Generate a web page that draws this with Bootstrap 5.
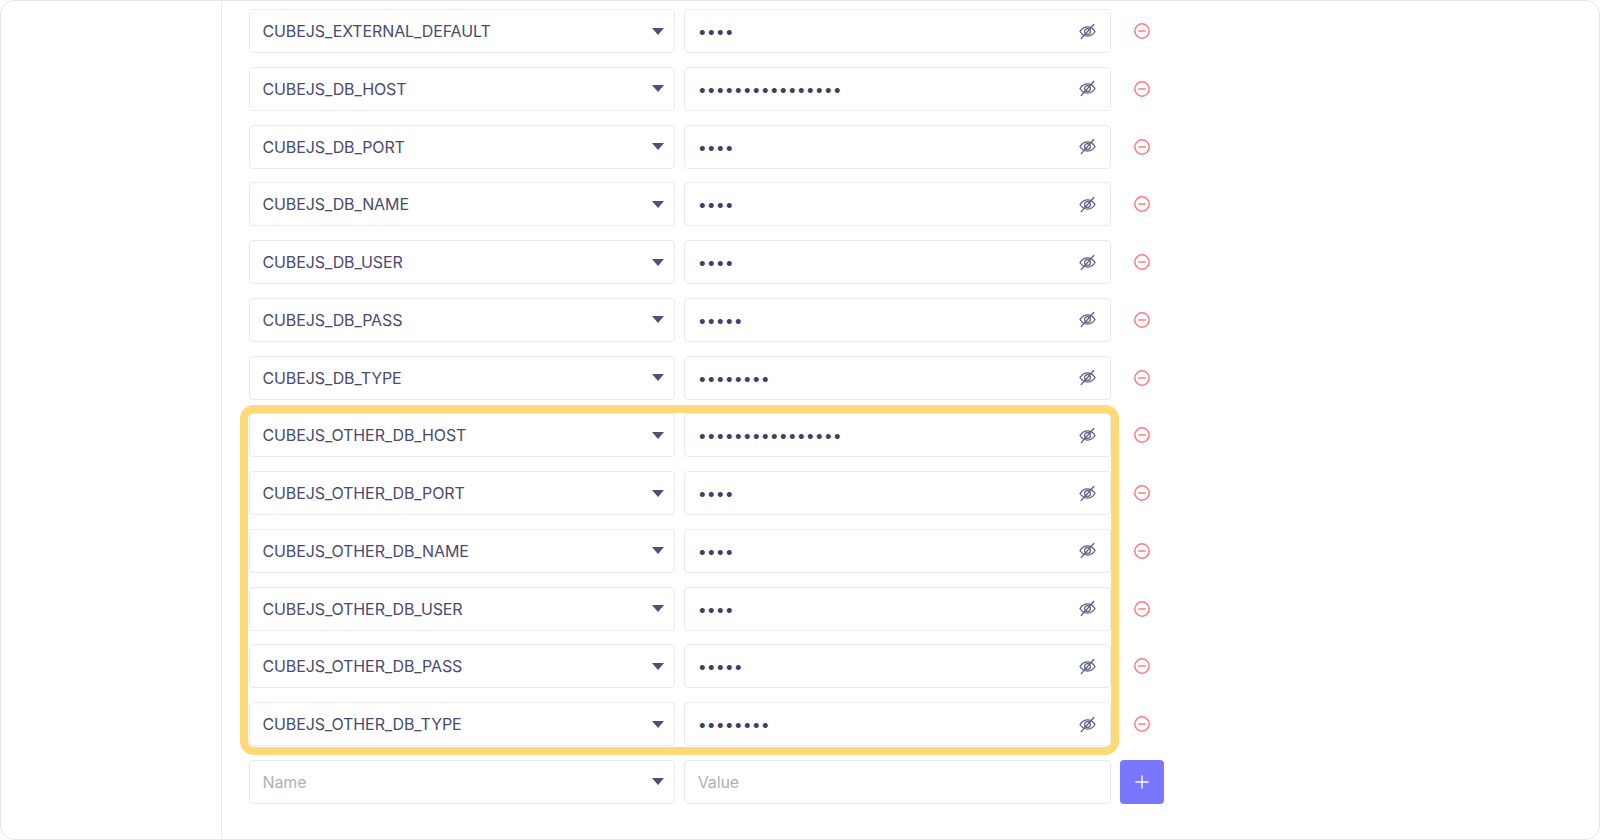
<!DOCTYPE html>
<html lang="en">
<head>
<meta charset="utf-8">
<title>Environment variables</title>
<link href="https://cdn.jsdelivr.net/npm/bootstrap@5.3.0/dist/css/bootstrap.min.css" rel="stylesheet">
<style>
html, body { height: 100%; margin: 0; background: #fff; }
body { font-family: Inter, "Liberation Sans", sans-serif; color: #4a4a70; overflow: hidden; }
.app-frame { height: 840px; border: 1px solid #e6e6ec; border-radius: 14px; overflow: hidden; }
.side-pane { width: 221px; flex: none; border-right: 1px solid #e6e6ec; }
.env-pane { padding: 8.1px 0 0 27px; }
.env-list { display: flex; flex-direction: column; gap: 13.75px; width: 917px; }
.env-group { display: flex; flex-direction: column; gap: 13.75px; position: relative; }
.env-mark { position: absolute; inset: -8.5px auto -8.5px -9px; width: 878.5px; border: 8.5px solid #fdd977; border-radius: 14px; pointer-events: none; }
.env-row { display: flex; gap: 9px; height: 44px; align-items: stretch; position: relative; }
.env-cell { width: 426.25px; flex: none; position: relative; }
.env-cell .form-control { height: 44px; padding: 0 44px 0 12.5px; border: 1px solid #e9e9ef; border-radius: 4px; font-size: 16px; letter-spacing: -0.11px; color: #4a4a70; background: #fff; box-shadow: none; }
.env-cell .form-control::placeholder { color: #b0b0b8; opacity: 1; }
.env-cell input[type=password] { letter-spacing: 0; color: #3f3f68; }
.env-caret { position: absolute; right: 11.5px; top: 18.5px; width: 0; height: 0; border-left: 6px solid transparent; border-right: 6px solid transparent; border-top: 7px solid #4f4f78; pointer-events: none; }
.env-eye { position: absolute; right: 14.5px; top: 13.5px; width: 17px; height: 17px; color: #5c5c7e; }
.env-minus { width: 44px; flex: none; display: flex; align-items: center; justify-content: center; color: #ff7a80; }
.env-add { width: 44.5px; height: 44.5px; flex: none; padding: 0; border: 0; border-radius: 4px; background: #7a77ff; color: #fff; display: flex; align-items: center; justify-content: center; }
</style>
</head>
<body>
<svg width="0" height="0" class="d-block" aria-hidden="true">
  <symbol id="ic-eye" viewBox="0 0 17 17"><path d="M1 8.5C3 5.400 5.600 3.900 8.500 3.900s5.500 1.500 7.500 4.600c-2 3.100-4.600 4.600-7.500 4.600S3 11.600 1 8.500Z" fill="none" stroke="currentColor" stroke-width="1.300"/><circle cx="8.500" cy="8.500" r="2.900" fill="none" stroke="currentColor" stroke-width="1.200"/><path d="M14.800 1.500 2.200 15.600" fill="none" stroke="currentColor" stroke-width="1.300" stroke-linecap="round"/></symbol>
  <symbol id="ic-minus" viewBox="0 0 16 16"><circle cx="8" cy="8" r="7.200" fill="none" stroke="currentColor" stroke-width="1.500"/><path d="M4.800 8h6.400" fill="none" stroke="currentColor" stroke-width="1.500" stroke-linecap="round"/></symbol>
</svg>
<div class="app-frame d-flex">
  <div class="side-pane"></div>
  <div class="env-pane flex-grow-1">
    <div class="env-list">
      <div class="env-row"><div class="env-cell"><input class="form-control" value="CUBEJS_EXTERNAL_DEFAULT"><span class="env-caret"></span></div><div class="env-cell"><input class="form-control" type="password" value="true"><svg class="env-eye"><use href="#ic-eye"/></svg></div><div class="env-minus"><svg width="16" height="16"><use href="#ic-minus"/></svg></div></div>
      <div class="env-row"><div class="env-cell"><input class="form-control" value="CUBEJS_DB_HOST"><span class="env-caret"></span></div><div class="env-cell"><input class="form-control" type="password" value="xxxxxxxxxxxxxxxx"><svg class="env-eye"><use href="#ic-eye"/></svg></div><div class="env-minus"><svg width="16" height="16"><use href="#ic-minus"/></svg></div></div>
      <div class="env-row"><div class="env-cell"><input class="form-control" value="CUBEJS_DB_PORT"><span class="env-caret"></span></div><div class="env-cell"><input class="form-control" type="password" value="xxxx"><svg class="env-eye"><use href="#ic-eye"/></svg></div><div class="env-minus"><svg width="16" height="16"><use href="#ic-minus"/></svg></div></div>
      <div class="env-row"><div class="env-cell"><input class="form-control" value="CUBEJS_DB_NAME"><span class="env-caret"></span></div><div class="env-cell"><input class="form-control" type="password" value="xxxx"><svg class="env-eye"><use href="#ic-eye"/></svg></div><div class="env-minus"><svg width="16" height="16"><use href="#ic-minus"/></svg></div></div>
      <div class="env-row"><div class="env-cell"><input class="form-control" value="CUBEJS_DB_USER"><span class="env-caret"></span></div><div class="env-cell"><input class="form-control" type="password" value="xxxx"><svg class="env-eye"><use href="#ic-eye"/></svg></div><div class="env-minus"><svg width="16" height="16"><use href="#ic-minus"/></svg></div></div>
      <div class="env-row"><div class="env-cell"><input class="form-control" value="CUBEJS_DB_PASS"><span class="env-caret"></span></div><div class="env-cell"><input class="form-control" type="password" value="xxxxx"><svg class="env-eye"><use href="#ic-eye"/></svg></div><div class="env-minus"><svg width="16" height="16"><use href="#ic-minus"/></svg></div></div>
      <div class="env-row"><div class="env-cell"><input class="form-control" value="CUBEJS_DB_TYPE"><span class="env-caret"></span></div><div class="env-cell"><input class="form-control" type="password" value="xxxxxxxx"><svg class="env-eye"><use href="#ic-eye"/></svg></div><div class="env-minus"><svg width="16" height="16"><use href="#ic-minus"/></svg></div></div>
      <div class="env-group">
        <div class="env-row"><div class="env-cell"><input class="form-control" value="CUBEJS_OTHER_DB_HOST"><span class="env-caret"></span></div><div class="env-cell"><input class="form-control" type="password" value="xxxxxxxxxxxxxxxx"><svg class="env-eye"><use href="#ic-eye"/></svg></div><div class="env-minus"><svg width="16" height="16"><use href="#ic-minus"/></svg></div></div>
        <div class="env-row"><div class="env-cell"><input class="form-control" value="CUBEJS_OTHER_DB_PORT"><span class="env-caret"></span></div><div class="env-cell"><input class="form-control" type="password" value="xxxx"><svg class="env-eye"><use href="#ic-eye"/></svg></div><div class="env-minus"><svg width="16" height="16"><use href="#ic-minus"/></svg></div></div>
        <div class="env-row"><div class="env-cell"><input class="form-control" value="CUBEJS_OTHER_DB_NAME"><span class="env-caret"></span></div><div class="env-cell"><input class="form-control" type="password" value="xxxx"><svg class="env-eye"><use href="#ic-eye"/></svg></div><div class="env-minus"><svg width="16" height="16"><use href="#ic-minus"/></svg></div></div>
        <div class="env-row"><div class="env-cell"><input class="form-control" value="CUBEJS_OTHER_DB_USER"><span class="env-caret"></span></div><div class="env-cell"><input class="form-control" type="password" value="xxxx"><svg class="env-eye"><use href="#ic-eye"/></svg></div><div class="env-minus"><svg width="16" height="16"><use href="#ic-minus"/></svg></div></div>
        <div class="env-row"><div class="env-cell"><input class="form-control" value="CUBEJS_OTHER_DB_PASS"><span class="env-caret"></span></div><div class="env-cell"><input class="form-control" type="password" value="xxxxx"><svg class="env-eye"><use href="#ic-eye"/></svg></div><div class="env-minus"><svg width="16" height="16"><use href="#ic-minus"/></svg></div></div>
        <div class="env-row"><div class="env-cell"><input class="form-control" value="CUBEJS_OTHER_DB_TYPE"><span class="env-caret"></span></div><div class="env-cell"><input class="form-control" type="password" value="xxxxxxxx"><svg class="env-eye"><use href="#ic-eye"/></svg></div><div class="env-minus"><svg width="16" height="16"><use href="#ic-minus"/></svg></div></div>
        <div class="env-mark"></div>
      </div>
      <div class="env-row"><div class="env-cell"><input class="form-control" placeholder="Name"><span class="env-caret"></span></div><div class="env-cell"><input class="form-control" placeholder="Value"></div><button class="btn env-add" type="button" aria-label="Add"><svg width="14" height="14" viewBox="0 0 14 14"><path d="M7 1v12M1 7h12" stroke="currentColor" stroke-width="1.400" stroke-linecap="round"/></svg></button></div>
    </div>
  </div>
</div>
<script src="https://cdn.jsdelivr.net/npm/bootstrap@5.3.0/dist/js/bootstrap.bundle.min.js"></script>
</body>
</html>
